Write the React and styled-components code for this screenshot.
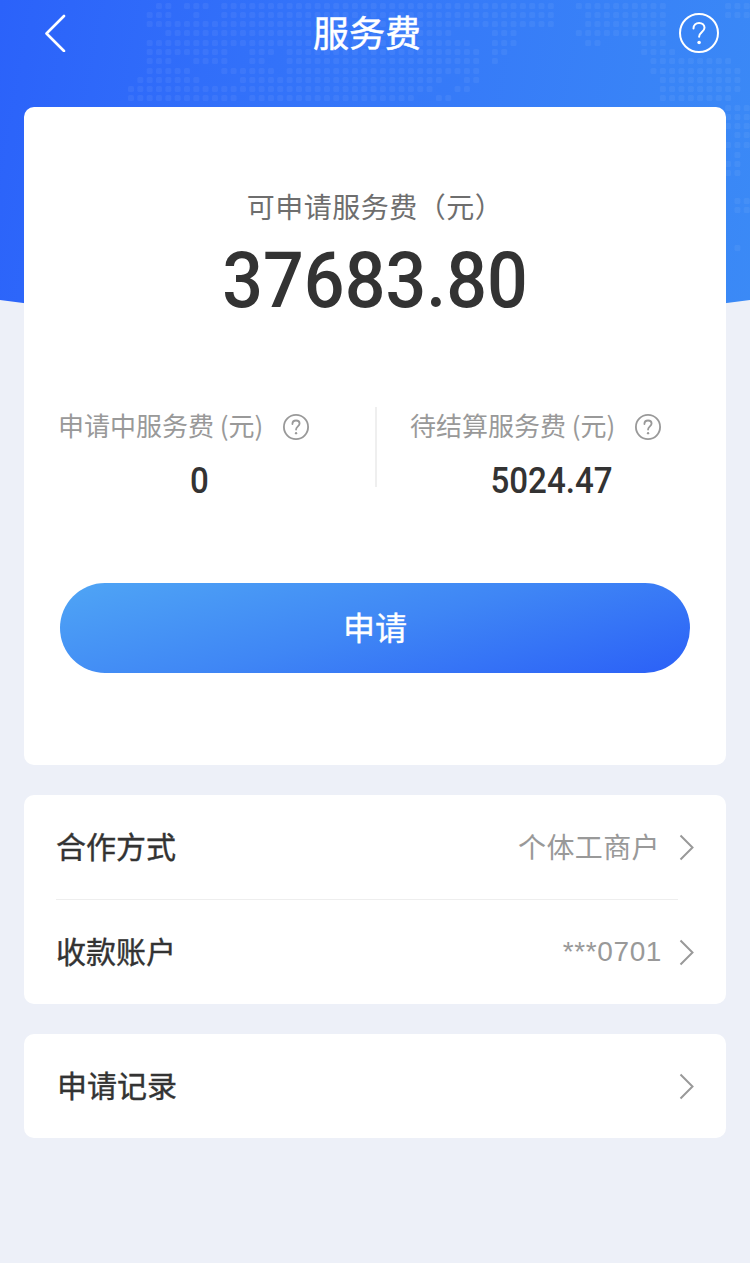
import React from "react";
import styled, { createGlobalStyle } from "styled-components";

const GlobalStyle = createGlobalStyle`
  html, body {
    margin: 0;
    padding: 0;
    background: #edf0f8;
  }
  body {
    font-family: "Noto Sans CJK SC", "Liberation Sans", sans-serif;
  }
`;

const Page = styled.div`
  position: relative;
  width: 750px;
  height: 1263px;
  overflow: hidden;
  background: #edf0f8;
`;

const Hero = styled.div`
  position: absolute;
  top: 0;
  left: 0;
  width: 750px;
  height: 330px;
  background: linear-gradient(100deg, #2b62fa 0%, #3474f9 40%, #3b8af6 100%);
  clip-path: circle(2717px at 375px -2391px);
`;

const DotMap = styled.svg`
  display: block;
  width: 750px;
  height: 330px;
`;

const Content = styled.div`
  position: relative;
  display: flex;
  flex-direction: column;
`;

const NavBar = styled.header`
  display: grid;
  grid-template-columns: 269px 1fr 40px;
  align-items: center;
  height: 66px;
  margin-bottom: 41px;
  padding: 0 31px 0 44px;
`;

const NavTitle = styled.h1`
  margin: 0;
  font-size: 36px;
  font-weight: 400;
  line-height: 62px;
  height: 66px;
  color: #fff;
  -webkit-text-stroke: 0.5px #fff;
`;

const Cards = styled.main`
  display: flex;
  flex-direction: column;
  gap: 30px;
  margin: 0 24px;
`;

const Card = styled.section`
  background: #fff;
  border-radius: 10px;
`;

const SummaryCard = styled(Card)`
  display: flex;
  flex-direction: column;
  padding: 80px 0 92px;
`;

const AvailableLabel = styled.div`
  height: 40px;
  font-size: 28px;
  line-height: 38px;
  letter-spacing: 0.5px;
  color: #6e6e6e;
  text-align: center;
`;

const Amount = styled.div`
  height: 80px;
  margin-top: 14px;
  margin-bottom: -1px;
  font-family: "Roboto", sans-serif;
  font-size: 78px;
  font-weight: 500;
  line-height: 80px;
  color: #333;
  text-align: center;
  transform: scaleX(0.92);
`;

const Stats = styled.div`
  display: grid;
  grid-template-columns: 351px 2px 1fr;
  margin-top: 87px;
`;

const Stat = styled.div`
  display: flex;
  flex-direction: column;
`;

const StatLabel = styled.div`
  display: flex;
  align-items: center;
  gap: 20px;
  height: 40px;
  padding-left: ${(p) => p.$inset}px;
  font-size: 26px;
  color: #999;
  white-space: nowrap;
`;

const StatLabelText = styled.span`
  padding-bottom: 5px;
`;

const StatValue = styled.div`
  height: 40px;
  margin-top: 14px;
  font-family: "Roboto", sans-serif;
  font-size: 36px;
  font-weight: 500;
  line-height: 40px;
  color: #333;
  text-align: center;
  transform: scaleX(0.92);
`;

const StatDivider = styled.div`
  height: 80px;
  background: #efefef;
`;

const ApplyButton = styled.button`
  display: block;
  width: 630px;
  height: 90px;
  margin: 82px 0 0 36px;
  padding: 0 0 4px;
  border: 0;
  border-radius: 45px;
  background: linear-gradient(165deg, #4fa5f5 0%, #3f86f5 50%, #2b60f7 100%);
  font-family: inherit;
  font-size: 32px;
  font-weight: 400;
  color: #fff;
  -webkit-text-stroke: 0.4px #fff;
`;

const Row = styled.div`
  display: flex;
  align-items: center;
  justify-content: space-between;
  height: ${(p) => p.$height}px;
  padding: 0 32px 0 ${(p) => p.$inset}px;
`;

const RowTitle = styled.span`
  padding-bottom: 4px;
  font-size: 30px;
  font-weight: 400;
  color: #333;
  -webkit-text-stroke: 0.4px #333;
`;

const RowEnd = styled.span`
  display: flex;
  align-items: center;
  gap: ${(p) => p.$gap}px;
`;

const RowValue = styled.span`
  padding-bottom: 3px;
  font-size: 28px;
  letter-spacing: 0.4px;
  color: #999;
`;

const RowNumber = styled(RowValue)`
  padding-bottom: 0;
  font-family: "Liberation Sans", sans-serif;
  letter-spacing: 0.6px;
`;

const RowDivider = styled.div`
  height: 1px;
  margin: 0 48px 0 32px;
  background: #eeeeee;
`;

const Chevron = styled.svg`
  display: block;
  flex: none;
  width: 15px;
  height: 27px;
`;

// x ranges of the dots per map row, read off the screenshot
const mapRows = [
  [6, [[155, 173], [183, 208], [220, 555], [577, 663], [725, 750]]],
  [15, [[147, 173], [193, 200], [220, 555], [585, 663], [725, 750]]],
  [24, [[147, 555], [585, 663]]],
  [33, [[165, 455], [492, 517], [577, 670]]],
  [43, [[147, 470], [492, 517], [585, 602], [643, 663]]],
  [52, [[147, 228], [248, 277], [287, 480], [492, 507], [640, 673]]],
  [61, [[147, 172], [193, 228], [248, 263], [287, 480], [492, 498], [650, 733]]],
  [71, [[147, 190], [220, 277], [287, 480], [650, 742]]],
  [80, [[138, 198], [240, 442], [465, 480], [660, 743]]],
  [89, [[128, 433], [455, 470], [660, 737]]],
  [98, [[128, 237], [248, 413], [437, 452], [660, 735]]],
  [108, [[726, 750]]],
  [117, [[726, 750]]],
  [126, [[726, 750]]],
  [135, [[735, 750]]],
  [145, [[726, 750]]],
  [155, [[730, 745]]],
  [164, [[726, 745]]],
  [173, [[726, 745]]],
  [201, [[735, 750]]],
  [210, [[735, 750]]],
  [248, [[735, 745]]],
];

const PITCH = 9.33;

const mapDots = mapRows.flatMap(([y, ranges]) =>
  ranges.flatMap(([from, to]) => {
    const dots = [];
    for (let i = 0; 128 + i * PITCH < 750; i++) {
      const x = 128 + i * PITCH;
      if (x >= from - 4 && x <= to - 2) dots.push({ x, y });
    }
    return dots;
  })
);

function BackIcon() {
  return (
    <svg width="22" height="38" viewBox="0 0 22 38" fill="none">
      <path d="M20 2 2.500 19.500 20 37" stroke="#fff" strokeWidth="2.600" strokeLinecap="round" strokeLinejoin="round" />
    </svg>
  );
}

function HelpIcon({ size, color, width }) {
  return (
    <svg width={size} height={size} viewBox="0 0 40 40" fill="none">
      <circle cx="20" cy="20" r={20 - width / 2} stroke={color} strokeWidth={width} />
      <path
        d="M14.500 15.500c0-3.300 2.400-5.500 5.600-5.500 3.100 0 5.400 2 5.400 4.800 0 4-5.400 4.600-5.400 9"
        stroke={color}
        strokeWidth={width}
        strokeLinecap="round"
      />
      <circle cx="20.100" cy="29.500" r="1.800" fill={color} />
    </svg>
  );
}

function RowChevron() {
  return (
    <Chevron viewBox="0 0 15 27" fill="none">
      <path d="M1.500 1.500 13.500 13.500 1.500 25.500" stroke="#999" strokeWidth="2" />
    </Chevron>
  );
}

export default function App() {
  return (
    <Page>
      <GlobalStyle />
      <Hero>
        <DotMap viewBox="0 0 750 330">
          {mapDots.map((d) => (
            <rect key={`${d.x}-${d.y}`} x={d.x} y={d.y - 3} width="6" height="6" rx="1.500" fill="#fff" opacity="0.055" />
          ))}
        </DotMap>
      </Hero>
      <Content>
        <NavBar>
          <BackIcon />
          <NavTitle>服务费</NavTitle>
          <HelpIcon size={40} color="#fff" width={2} />
        </NavBar>
        <Cards>
          <SummaryCard>
            <AvailableLabel>可申请服务费（元）</AvailableLabel>
            <Amount>37683.80</Amount>
            <Stats>
              <Stat>
                <StatLabel $inset={34}>
                  <StatLabelText>申请中服务费 (元)</StatLabelText>
                  <HelpIcon size={26} color="#999" width={2.800} />
                </StatLabel>
                <StatValue>0</StatValue>
              </Stat>
              <StatDivider />
              <Stat>
                <StatLabel $inset={33}>
                  <StatLabelText>待结算服务费 (元)</StatLabelText>
                  <HelpIcon size={26} color="#999" width={2.800} />
                </StatLabel>
                <StatValue>5024.47</StatValue>
              </Stat>
            </Stats>
            <ApplyButton>申请</ApplyButton>
          </SummaryCard>
          <Card>
            <Row $height={104} $inset={32}>
              <RowTitle>合作方式</RowTitle>
              <RowEnd $gap={19}>
                <RowValue>个体工商户</RowValue>
                <RowChevron />
              </RowEnd>
            </Row>
            <RowDivider />
            <Row $height={104} $inset={32}>
              <RowTitle>收款账户</RowTitle>
              <RowEnd $gap={17}>
                <RowNumber>***0701</RowNumber>
                <RowChevron />
              </RowEnd>
            </Row>
          </Card>
          <Card>
            <Row $height={104} $inset={33}>
              <RowTitle>申请记录</RowTitle>
              <RowChevron />
            </Row>
          </Card>
        </Cards>
      </Content>
    </Page>
  );
}
